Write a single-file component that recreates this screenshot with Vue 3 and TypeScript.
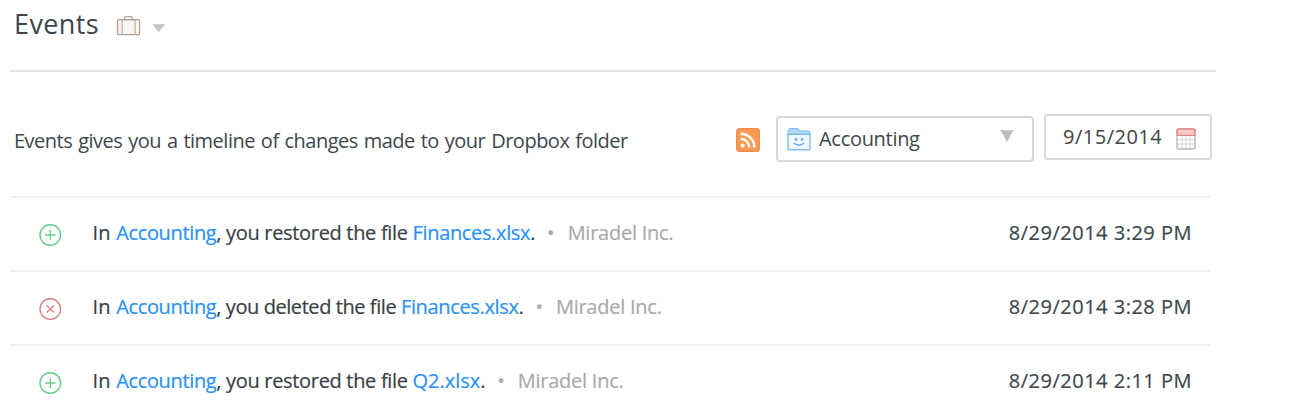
<script setup lang="ts">
interface EventItem {
  kind: 'restored' | 'deleted'
  file: string
  time: string
}

const events: EventItem[] = [
  { kind: 'restored', file: 'Finances.xlsx', time: '8/29/2014 3:29 PM' },
  { kind: 'deleted', file: 'Finances.xlsx', time: '8/29/2014 3:28 PM' },
  { kind: 'restored', file: 'Q2.xlsx', time: '8/29/2014 2:11 PM' },
]
</script>

<template>
  <main class="page">
    <header class="header">
      <h1>Events</h1>
      <svg class="briefcase" width="26" height="22" viewBox="0 0 26 22">
        <path d="M8.5 4V2.7Q8.5 1.7 9.5 1.7H15Q16 1.7 16 2.7V4" fill="none" stroke="#a9a9aa" stroke-width="1.3" />
        <rect x="1.6" y="4.7" width="22" height="15" rx="1" fill="#f7f6f0" stroke="#b3a295" stroke-width="1.3" />
        <path d="M6.2 5V19.4M19.2 5V19.4" stroke="#c8b6a5" stroke-width="1.3" />
        <path d="M5 4.7H20" stroke="#a9a39f" stroke-width="1.2" />
      </svg>
      <svg class="caret" width="14" height="9" viewBox="0 0 14 9"><path d="M.3.3H13.3L6.8 8Z" fill="#bdc4ca" /></svg>
    </header>

    <section class="toolbar">
      <p>Events gives you a timeline of changes made to your Dropbox folder</p>
      <svg class="rss" width="24" height="24" viewBox="0 0 24 24">
        <rect x=".6" y=".6" width="22.8" height="22.8" rx="3" fill="#fa9a50" stroke="#e88d4c" stroke-width="1.2" />
        <circle cx="6.6" cy="17.4" r="2" fill="#fff" />
        <path d="M4.6 10.8A8.6 8.6 0 0 1 13.2 19.4M4.6 5.7A13.7 13.7 0 0 1 18.3 19.4" fill="none" stroke="#fff" stroke-width="2.4" />
      </svg>
      <div class="select">
        <svg width="24" height="24" viewBox="0 0 24 24">
          <path d="M1 8V4.5L3 1.5H10L12.5 4H21.5L23 5.5V8Z" fill="#b4d9f8" stroke="#7dbcf3" stroke-width="1.2" />
          <rect x="1" y="7.2" width="22" height="15.6" rx=".8" fill="#f1f8fe" stroke="#7dbcf3" stroke-width="1.4" />
          <circle cx="9" cy="12.4" r="1.4" fill="#64aced" />
          <circle cx="15" cy="12.4" r="1.4" fill="#64aced" />
          <path d="M6.8 16Q12 20.4 17.2 16" fill="none" stroke="#64aced" stroke-width="1.4" />
        </svg>
        <span>Accounting</span>
        <svg class="arrow" width="14" height="12" viewBox="0 0 14 12"><path d="M0 .5H14" stroke="#cecece" /><path d="M1 1H13L7 12Z" fill="#bcbcbc" /></svg>
      </div>
      <div class="date">
        <span>9/15/2014</span>
        <svg width="20" height="22" viewBox="0 0 20 22">
          <rect x="1" y="1" width="18" height="20" rx="2" fill="#fff" stroke="#b8b8b8" stroke-width="1.4" />
          <path d="M2 11.8H18M2 16H18M6 8V20M10 8V20M14 8V20" stroke="#d8d8d8" stroke-width="1.1" />
          <path d="M1 7.4V3Q1 1 3 1H17Q19 1 19 3V7.4Z" fill="#fac8c7" stroke="#df8787" stroke-width="1.3" />
        </svg>
      </div>
    </section>

    <ul class="events">
      <li v-for="event in events" :key="event.time">
        <svg class="status" :class="event.kind" width="24" height="24" viewBox="0 0 24 24" fill="none" stroke-width="1.4">
          <circle cx="12.3" cy="12" r="10.3" />
          <path v-if="event.kind === 'restored'" d="M7.1 12H17.5M12.3 6.8V17.2" />
          <path v-else d="M8.7 8.4L15.9 15.6M15.9 8.4L8.7 15.6" />
        </svg>
        <p class="summary" :class="event.kind">
          <span class="lead">In </span><a>Accounting</a>, you {{ event.kind }} the file <a :class="{ short: event.file.length < 8 }">{{ event.file }}</a>.
        </p>
        <span class="dot">•</span>
        <span class="team">Miradel Inc.</span>
        <time>{{ event.time }}</time>
      </li>
    </ul>
  </main>
</template>

<style>
body {
  margin: 0;
  background: #fff;
}
</style>

<style scoped>
.page {
  height: 416px;
  overflow: hidden;
  padding-left: 10px;
  font: 20px/28px 'Open Sans', sans-serif;
  color: #3d464d;
  white-space: nowrap;
}
h1, p, ul {
  margin: 0;
  padding: 0;
}
svg {
  display: block;
  flex: none;
}
.header {
  box-sizing: border-box;
  display: flex;
  width: 1206px;
  height: 72px;
  padding-left: 4px;
  border-bottom: 2px solid #e3e3e3;
}
h1 {
  width: 102px;
  padding-top: 6px;
  font-size: 27px;
  line-height: 36px;
  font-weight: 400;
  letter-spacing: 0.4px;
}
.briefcase {
  margin-top: 15px;
}
.caret {
  margin: 24px 0 0 10px;
}
.toolbar {
  display: flex;
  width: 1206px;
  height: 82px;
  padding-top: 42px;
}
.toolbar p {
  flex: none;
  width: 726px;
  padding: 13px 0 0 4px;
  letter-spacing: -0.5px;
  word-spacing: 1.2px;
}
.rss {
  margin: 14px 16px 0 0;
}
.toolbar p, .select, .date {
  box-sizing: border-box;
}
.select, .date {
  flex: none;
  display: flex;
  height: 46px;
  border: 2px solid #d8d8d8;
  border-radius: 4px;
}
.select {
  width: 258px;
  margin: 2px 10px 0 0;
  padding: 9px 18px 0 9px;
}
.select span {
  margin: -2px 0 0 8px;
  letter-spacing: -0.3px;
}
.select .arrow {
  margin: 3px 0 0 auto;
}
.date {
  width: 168px;
  padding: 7px 14px 0 17px;
  color: #444;
  letter-spacing: 0.5px;
}
.date svg {
  margin: 5px 0 0 auto;
}
.events {
  width: 1200px;
  list-style: none;
}
li {
  box-sizing: border-box;
  display: flex;
  height: 74px;
  padding: 21px 18px 0 28px;
  border-top: 2px solid #ebf0f4;
  -webkit-text-stroke: 0.2px;
}
.status {
  margin: 4px 30.5px 0 0;
}
.status.restored {
  stroke: #65cf8b;
}
.status.deleted {
  stroke: #d98282;
}
.summary {
  color: #3a3f45;
  letter-spacing: -0.32px;
}
.summary.deleted {
  letter-spacing: -0.43px;
}
.summary .lead {
  letter-spacing: 0.2px;
}
a {
  color: #2a91f5;
  letter-spacing: -0.35px;
}
a.short {
  letter-spacing: 0;
}
.dot {
  margin-left: 12px;
  color: #aaa;
}
.team {
  margin-left: 13px;
  color: #aaa;
  letter-spacing: -0.25px;
}
time {
  margin-left: auto;
  letter-spacing: 0.5px;
}
</style>
